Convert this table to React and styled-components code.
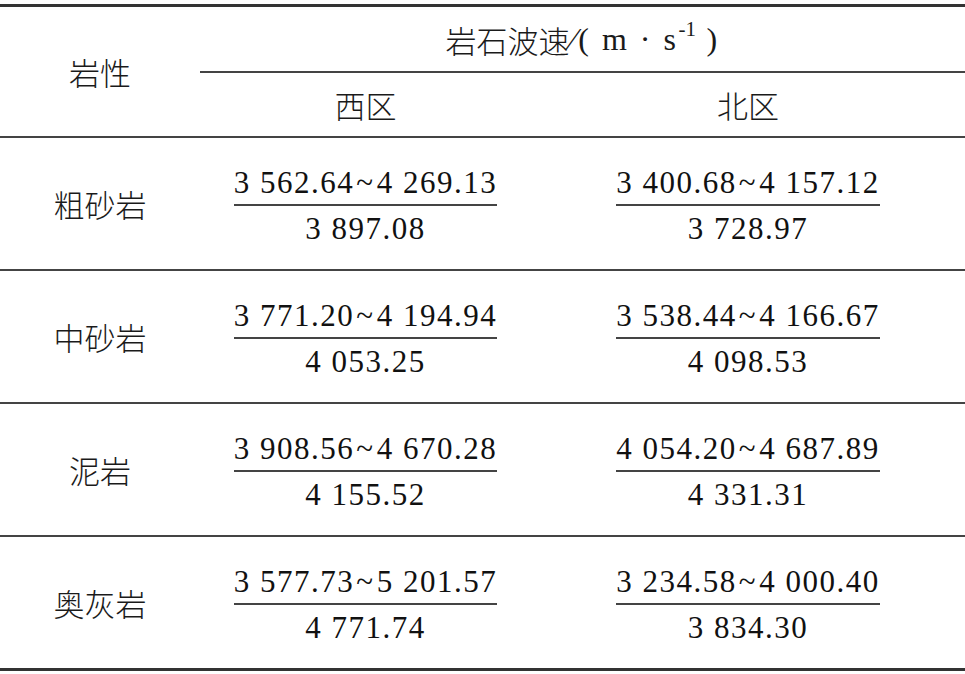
import React from 'react'
import styled, {createGlobalStyle} from 'styled-components'

const Global = createGlobalStyle`
    *, *::before, *::after {
        box-sizing: border-box;
    }
    html, body {
        margin: 0;
        background: #fff;
    }
    body {
        font-family: "Liberation Serif", "Noto Sans CJK SC", serif;
        color: #111;
    }
`

const rows = [
    {name: '粗砂岩', west: ['3 562.64', '4 269.13', '3 897.08'], north: ['3 400.68', '4 157.12', '3 728.97']},
    {name: '中砂岩', west: ['3 771.20', '4 194.94', '4 053.25'], north: ['3 538.44', '4 166.67', '4 098.53']},
    {name: '泥岩', west: ['3 908.56', '4 670.28', '4 155.52'], north: ['4 054.20', '4 687.89', '4 331.31']},
    {name: '奥灰岩', west: ['3 577.73', '5 201.57', '4 771.74'], north: ['3 234.58', '4 000.40', '3 834.30']},
]

const Table = styled.div`
    margin-top: 4px;
    width: 965px;
    border-top: 3px solid #333;
    border-bottom: 3px solid #333;
    display: grid;
    grid-template-columns: 200px 331px 1fr;
`

const Cell = styled.div`
    display: flex;
    align-items: center;
    justify-content: center;
    font-family: "Noto Sans CJK SC", sans-serif;
    font-weight: 300;
    color: #1a1a1a;
    font-size: 31px;
    height: ${p => p.$h}px;
    border-top: ${p => (p.$rule ? '2px solid #444' : 'none')};
    grid-column: ${p => p.$col || 'auto'};
    grid-row: ${p => p.$row || 'auto'};
`

const HeadGroup = styled(Cell)`
    border-bottom: 2px solid #444;
`

const Unit = styled.span`
    font-family: "Liberation Serif", serif;
    font-weight: 400;
    font-size: 32px;
    margin-left: 1px;
    letter-spacing: 2.5px;
    sup {
        font-size: 21px;
        vertical-align: 14px;
        line-height: 0;
        letter-spacing: 0;
    }
`

const Frac = styled.div`
    display: inline-grid;
    justify-items: center;
    font-family: "Liberation Serif", serif;
    font-weight: 400;
    color: #111;
    font-size: 31px;
    letter-spacing: 1.5px;
    margin-top: 4px;
`

const Num = styled.div`
    line-height: 34px;
    padding: 0 0 4px;
    border-bottom: 2px solid #444;
    white-space: nowrap;
    .tilde {
        margin: 0 2px;
    }
`

const Den = styled.div`
    line-height: 34px;
    padding-top: 6px;
    white-space: nowrap;
`

const Range = ({v}) => (
    <Frac>
        <Num>{v[0]}<span className='tilde'>~</span>{v[1]}</Num>
        <Den>{v[2]}</Den>
    </Frac>
)

const App = () => {
    return (
        <>
            <Global />
            <Table>
                <Cell $col='1' $row='1 / span 2' $h={129}>岩性</Cell>
                <HeadGroup $col='2 / span 2' $h={66}>
                    岩石波速<Unit>∕( m · s<sup>-1</sup> )</Unit>
                </HeadGroup>
                <Cell $h={63}>西区</Cell>
                <Cell $h={63}>北区</Cell>
                {rows.map(r => (
                    <React.Fragment key={r.name}>
                        <Cell $rule $h={133}>{r.name}</Cell>
                        <Cell $rule $h={133}><Range v={r.west} /></Cell>
                        <Cell $rule $h={133}><Range v={r.north} /></Cell>
                    </React.Fragment>
                ))}
            </Table>
        </>
    )
}

export default App
